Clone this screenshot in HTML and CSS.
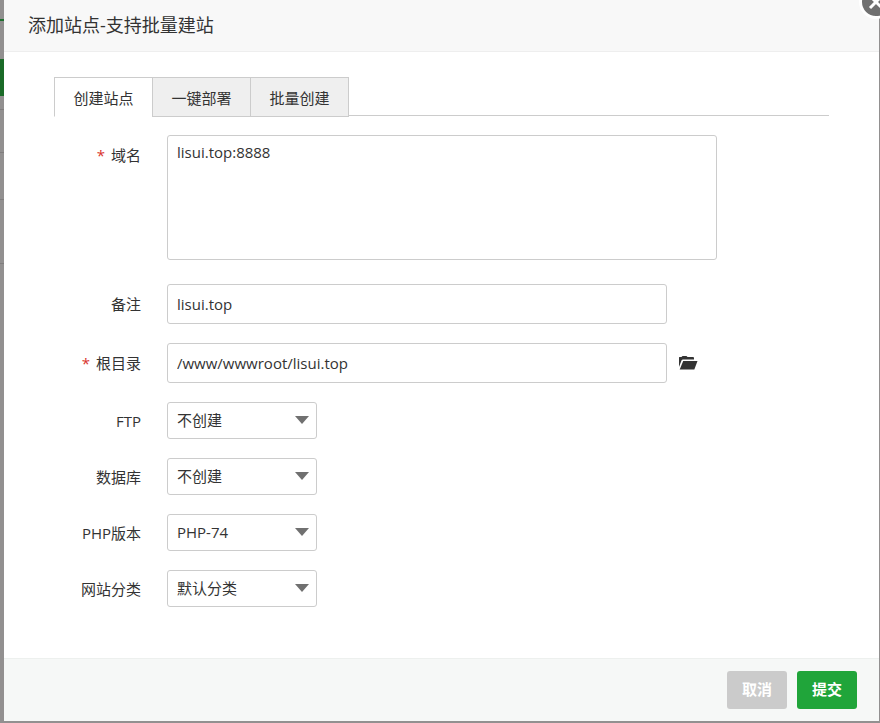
FILE: index.html
```html
<!DOCTYPE html>
<html lang="zh-CN">
<head>
  <meta charset="UTF-8">
  <meta name="viewport" content="width=device-width, initial-scale=1">
  <title>添加站点</title>
  <link rel="stylesheet" href="styles.css">
</head>
<body>

<div class="modal">
  <button class="close" type="button" aria-label="关闭">
    <svg viewBox="0 0 34 34" width="34" height="34">
      <circle cx="17" cy="17" r="15.5" fill="#707070" stroke="#fff" stroke-width="3"/>
      <path d="M11 11l12 12M23 11L11 23" stroke="#fff" stroke-width="3" fill="none"/>
    </svg>
  </button>

  <h1 class="modal-title">添加站点-支持批量建站</h1>

  <form class="site-form" id="siteForm">
    <div class="tabs">
      <button class="tab active" type="button">创建站点</button>
      <button class="tab" type="button">一键部署</button>
      <button class="tab" type="button">批量创建</button>
    </div>

    <div class="row row-domain">
      <label for="domain"><span class="required">*</span>域名</label>
      <textarea id="domain">lisui.top:8888</textarea>
    </div>
    <div class="row">
      <label for="remark">备注</label>
      <input type="text" id="remark" value="lisui.top">
    </div>
    <div class="row">
      <label for="path"><span class="required">*</span>根目录</label>
      <input type="text" id="path" value="/www/wwwroot/lisui.top">
      <button class="folder" type="button" aria-label="选择目录">
        <svg viewBox="0 0 20 16" width="20" height="16" fill="#333">
          <path d="M1 12V2.500Q1 2 1.500 2H3.500L4.500 1H8.500L9.500 2H15Q16 2 16 3V4.500H5Q4 4.500 3.600 5.300Z"/>
          <path d="M5.200 6H19.500L16.300 14.500H1.700Z"/>
        </svg>
      </button>
    </div>
    <div class="row">
      <label for="ftp">FTP</label>
      <div class="select">
        <select id="ftp"><option>不创建</option><option>创建</option></select>
      </div>
    </div>
    <div class="row">
      <label for="database">数据库</label>
      <div class="select">
        <select id="database"><option>不创建</option><option>MySQL</option></select>
      </div>
    </div>
    <div class="row">
      <label for="php">PHP版本</label>
      <div class="select">
        <select id="php"><option>PHP-74</option></select>
      </div>
    </div>
    <div class="row">
      <label for="type">网站分类</label>
      <div class="select">
        <select id="type"><option>默认分类</option></select>
      </div>
    </div>
  </form>

  <div class="modal-footer">
    <button class="btn btn-cancel" type="button">取消</button>
    <button class="btn btn-submit" type="submit" form="siteForm">提交</button>
  </div>
</div>

</body>
</html>
```
FILE: styles.css
```css
* {
  box-sizing: border-box;
}
body {
  margin: 0;
  min-height: 100vh;
  padding: 0 1px 2px 4px;
  display: flex;
  overflow: hidden;
  /* page behind the dialog */
  background-color: #929090;
  background-image: linear-gradient(transparent 19px, #1f7030 19px, #1f7030 21px, transparent 21px, transparent 59px, #1a6b28 59px, #1a6b28 96px, transparent 96px, transparent 109px, #807e7e 109px, #807e7e 110px, transparent 110px, transparent 152px, #807e7e 152px, #807e7e 153px, transparent 153px, transparent 199px, #807e7e 199px, #807e7e 200px, transparent 200px, transparent 263px, #807e7e 263px, #807e7e 264px, transparent 264px);
  background-size: 4px 100%;
  background-repeat: no-repeat;
  color: #333;
  font-family: "Open Sans", "Noto Sans CJK SC", sans-serif;
  font-size: 15px;
}
button, input, select, textarea {
  font: inherit;
  color: inherit;
}
button {
  cursor: pointer;
}
.modal {
  position: relative;
  flex: 1;
  display: flex;
  flex-direction: column;
  background: #fff;
}
.close {
  position: absolute;
  top: -15px;
  right: -14px;
  padding: 0;
  border: none;
  background: none;
  line-height: 0;
}
.modal-title {
  margin: 0;
  padding: 0 24px;
  height: 52px;
  line-height: 50px;
  font-size: 18px;
  font-weight: normal;
  background: #f8f8f8;
  border-bottom: 1px solid #eee;
}
.site-form {
  flex: 1;
  padding: 25px 50px;
}
.tabs {
  display: flex;
  height: 39px;
  margin-bottom: 19px;
  border-bottom: 1px solid #ccc;
}
.tab {
  width: 99px;
  height: 40px;
  margin-right: -1px;
  padding: 0;
  background: #efefef;
  border: 1px solid #ccc;
}
.tab.active {
  background: #fff;
  border-bottom-color: #fff;
}
.row {
  display: flex;
  align-items: center;
  margin-bottom: 19px;
}
.row label {
  width: 88px;
  margin-right: 25px;
  padding-right: 1px;
  line-height: 20px;
  text-align: right;
}
.required {
  margin-right: 6px;
  color: #d9322d;
}
.row input, .row textarea, .select select {
  border: 1px solid #ccc;
  border-radius: 3px;
  background: #fff;
  padding: 0 9px;
}
.row input {
  width: 500px;
  height: 40px;
}
.row textarea {
  width: 550px;
  height: 125px;
  padding: 6px 9px;
  line-height: 20px;
  resize: none;
}
.row-domain {
  align-items: flex-start;
  margin-bottom: 24px;
}
.row-domain label {
  padding-top: 10px;
}
.folder {
  height: 16px;
  margin-left: 11px;
  padding: 0;
  border: none;
  background: none;
  line-height: 0;
}
.select {
  position: relative;
  width: 150px;
}
.select select {
  display: block;
  width: 100%;
  height: 37px;
  padding-bottom: 2px;
  appearance: none;
}
.select::after {
  content: "";
  position: absolute;
  top: 14px;
  right: 8px;
  border: 7px solid transparent;
  border-top: 8px solid #707070;
  border-bottom: none;
  pointer-events: none;
}
.modal-footer {
  display: flex;
  justify-content: flex-end;
  gap: 10px;
  padding: 12px 22px;
  background: #f6f8f7;
  border-top: 1px solid #edf0ee;
}
.btn {
  width: 60px;
  height: 38px;
  padding: 0 0 4px;
  border: none;
  border-radius: 3px;
  color: #fff;
  font-weight: bold;
}
.btn-cancel {
  background: #cbcbcb;
}
.btn-submit {
  background: #20a53a;
}
```
